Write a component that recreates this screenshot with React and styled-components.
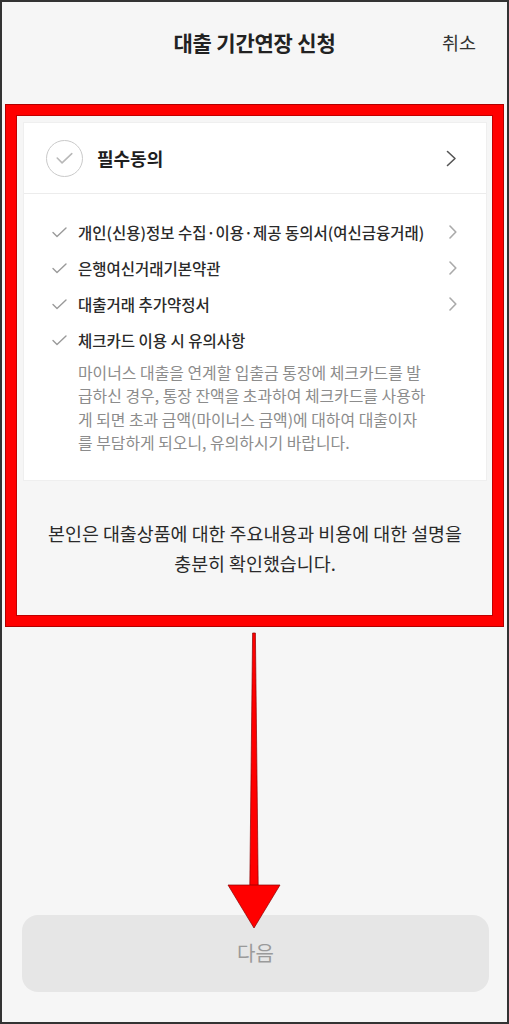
import React from 'react';
import styled, { createGlobalStyle } from 'styled-components';

const GlobalStyle = createGlobalStyle`
  * {
    box-sizing: border-box;
  }
  body {
    margin: 0;
    background: #f6f6f6;
    font-family: 'Noto Sans CJK KR', 'Noto Sans', sans-serif;
    color: #222;
  }
`;

const terms = [
  { title: '개인(신용)정보 수집·이용·제공 동의서(여신금융거래)', link: true },
  { title: '은행여신거래기본약관', link: true },
  { title: '대출거래 추가약정서', link: true },
  { title: '체크카드 이용 시 유의사항', link: false },
];

const notice = [
  '마이너스 대출을 연계할 입출금 통장에 체크카드를 발',
  '급하신 경우, 통장 잔액을 초과하여 체크카드를 사용하',
  '게 되면 초과 금액(마이너스 금액)에 대하여 대출이자',
  '를 부담하게 되오니, 유의하시기 바랍니다.',
];

function Chevron({ size = 'large' }) {
  const large = size === 'large';
  return (
    <ChevronIcon
      width={large ? 11 : 8}
      height={large ? 17 : 14}
      viewBox={large ? '0 0 11 17' : '0 0 8 14'}
      $color={large ? '#555' : '#aaa'}
    >
      {large ? (
        <polyline points="1.5,1.5 9,8.5 1.5,15.5" />
      ) : (
        <polyline points="1,1 6.8,7 1,13" />
      )}
    </ChevronIcon>
  );
}

function SmallCheck() {
  return (
    <CheckIcon width="15" height="11" viewBox="0 0 15 11">
      <polyline points="1,5.5 5,9.5 14,1" />
    </CheckIcon>
  );
}

function App() {
  return (
    <>
      <GlobalStyle />
      <Frame>
        <Header>
          <span />
          <Title>대출 기간연장 신청</Title>
          <Cancel>취소</Cancel>
        </Header>

        <Highlight>
          <Card>
            <CardHead>
              <CircleCheck>
                <svg width="36" height="36" viewBox="0 0 36 36">
                  <polyline points="10.5,18 15.5,23 25.5,13.5" />
                </svg>
              </CircleCheck>
              <HeadTitle>필수동의</HeadTitle>
              <Chevron />
            </CardHead>
            <TermList>
              {terms.map((t) => (
                <TermRow key={t.title}>
                  <SmallCheck />
                  <TermTitle>{t.title}</TermTitle>
                  {t.link && <Chevron size="small" />}
                </TermRow>
              ))}
              <Notice>
                {notice.map((line) => (
                  <span key={line}>{line}</span>
                ))}
              </Notice>
            </TermList>
          </Card>
          <Confirm>
            <span>본인은 대출상품에 대한 주요내용과 비용에 대한 설명을</span>
            <span>충분히 확인했습니다.</span>
          </Confirm>
        </Highlight>

        <Spacer />
        <NextButton disabled>다음</NextButton>

        <Arrow width="509" height="1024" viewBox="0 0 509 1024">
          <polygon points="252.6,633 255.4,633 258.2,886 249.8,886" />
          <polygon points="228,885 280,885 254,928" />
        </Arrow>
      </Frame>
    </>
  );
}

const Frame = styled.div`
  position: relative;
  width: 509px;
  height: 1024px;
  border: 2px solid #333;
  display: flex;
  flex-direction: column;
  background: #f6f6f6;
`;

const Header = styled.header`
  height: 80px;
  display: grid;
  grid-template-columns: 1fr auto 1fr;
  align-items: center;
`;

const Title = styled.h1`
  margin: 0;
  font-size: 21px;
  font-weight: 700;
  color: #222;
  letter-spacing: -0.2px;
`;

const Cancel = styled.button`
  justify-self: end;
  margin-right: 31px;
  padding: 0;
  border: 0;
  background: none;
  font-family: inherit;
  font-size: 18.5px;
  color: #333;
`;

const Highlight = styled.section`
  margin: 23px 4px 0;
  padding: 7px 6px 38px 7px;
  border: 10px solid #ff0000;
  box-shadow: 0 0 0 1px #b00000, inset 0 0 0 1px #c00000;
  background: #f6f6f6;
`;

const Card = styled.div`
  background: #fff;
  border: 1px solid #efefef;
`;

const CardHead = styled.div`
  height: 71px;
  display: flex;
  align-items: center;
  gap: 14px;
  padding: 0 29px 0 22px;
  border-bottom: 1px solid #ececec;
`;

const CircleCheck = styled.span`
  width: 37px;
  height: 37px;
  border-radius: 50%;
  border: 1.5px solid #cacaca;
  display: flex;
  align-items: center;
  justify-content: center;

  svg {
    fill: none;
    stroke: #b8b8b8;
    stroke-width: 1.6;
    stroke-linecap: round;
    stroke-linejoin: round;
  }
`;

const HeadTitle = styled.span`
  flex: 1;
  font-size: 18px;
  font-weight: 700;
  color: #1e1e1e;
`;

const ChevronIcon = styled.svg`
  flex: none;
  fill: none;
  stroke: ${({ $color }) => $color};
  stroke-width: 1.6;
  stroke-linecap: round;
  stroke-linejoin: round;
`;

const CheckIcon = styled.svg`
  flex: none;
  fill: none;
  stroke: #9a9a9a;
  stroke-width: 1.4;
  stroke-linecap: round;
  stroke-linejoin: round;
`;

const TermList = styled.div`
  padding: 20px 29px 26px 28px;
`;

const TermRow = styled.div`
  height: 36px;
  display: flex;
  align-items: center;
  gap: 11px;
`;

const TermTitle = styled.span`
  flex: 1;
  font-size: 15.5px;
  font-weight: 500;
  color: #2a2a2a;
  white-space: nowrap;
`;

const Notice = styled.p`
  margin: 3px 0 0;
  padding-left: 26px;
  display: flex;
  flex-direction: column;
  font-size: 15.9px;
  line-height: 23.3px;
  color: #8c8c8c;
  white-space: nowrap;
`;

const Confirm = styled.p`
  margin: 0;
  padding-top: 37px;
  display: flex;
  flex-direction: column;
  align-items: center;
  font-size: 18.4px;
  line-height: 30px;
  color: #2a2a2a;
  white-space: nowrap;
`;

const Spacer = styled.div`
  flex: 1;
`;

const NextButton = styled.button`
  height: 77px;
  margin: 0 18px 30px 20px;
  border: 0;
  border-radius: 16px;
  background: #e6e6e6;
  font-family: inherit;
  font-size: 20px;
  color: #9a9a9a;
  padding-bottom: 3px;
`;

const Arrow = styled.svg`
  position: absolute;
  top: -2px;
  left: -2px;
  pointer-events: none;

  polygon {
    fill: #ff0000;
    stroke: #8a0000;
    stroke-width: 0.7;
  }
`;

export default App;
